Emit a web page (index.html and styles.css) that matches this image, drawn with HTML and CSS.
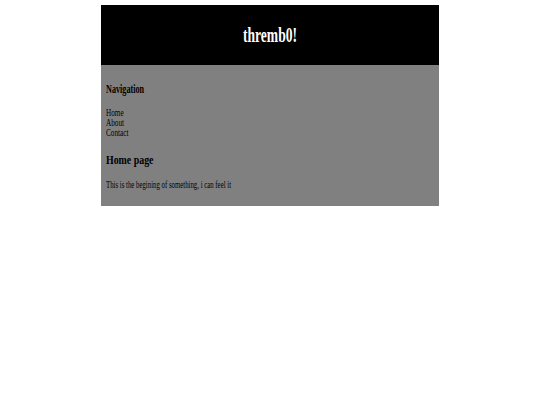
FILE: index.html
```html
<!DOCTYPE html>
<html>
<head>
<meta charset="utf-8">
<title>thremb0!</title>
<link rel="stylesheet" href="styles.css">
</head>
<body>
<div class="page">
  <header class="masthead">
    <h1 class="title">thremb0!</h1>
  </header>
  <main class="content">
    <h3 class="nav-title">Navigation</h3>
    <ul class="nav">
      <li><a href="#">Home</a></li>
      <li><a href="#">About</a></li>
      <li><a href="#">Contact</a></li>
    </ul>
    <h2 class="heading">Home page</h2>
    <p class="text">This is the begining of something, i can feel it</p>
  </main>
</div>
</body>
</html>
```
FILE: styles.css
```css
html, body {
  margin: 0;
  padding: 0;
  background: #ffffff;
}
body {
  font-family: "Liberation Serif", "Times New Roman", serif;
  color: #000;
  padding-top: 5px;
}
.page {
  width: 338px;
  margin: 0 auto;
}
.masthead {
  background: #000;
  height: 60px;
}
.title {
  margin: 0;
  color: #fff;
  font-size: 20px;
  line-height: 60px;
  font-weight: bold;
  text-align: center;
  transform: scaleX(0.68);
  transform-origin: center;
}
.content {
  background: #808080;
  padding: 17px 5px 16px 5px;
}
.nav-title {
  margin: 0;
  font-size: 12px;
  line-height: 14px;
  font-weight: bold;
  transform: scaleX(0.68);
  transform-origin: left;
}
.nav {
  list-style: none;
  margin: 12px 0 0 0;
  padding: 0;
  font-size: 10px;
  line-height: 10px;
  transform: scaleX(0.72);
  transform-origin: left;
}
.nav a {
  color: #000;
  text-decoration: none;
}
.heading {
  margin: 14px 0 0 0;
  font-size: 13px;
  line-height: 16px;
  font-weight: bold;
  transform: scaleX(0.76);
  transform-origin: left;
}
.text {
  margin: 12px 0 0 0;
  font-size: 10px;
  line-height: 10px;
  transform: scaleX(0.68);
  transform-origin: left;
}
```
